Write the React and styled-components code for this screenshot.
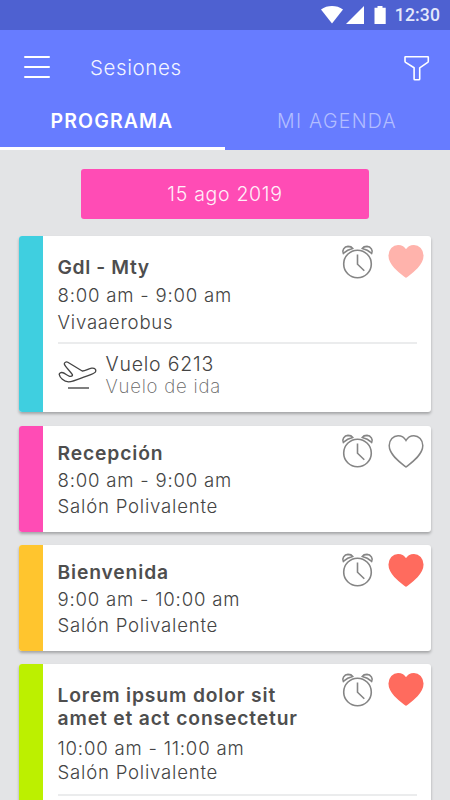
import React from 'react';
import styled, { createGlobalStyle } from 'styled-components';

const GlobalStyle = createGlobalStyle`
  * {
    box-sizing: border-box;
  }
  body {
    margin: 0;
    background: #e3e4e6;
    font-family: Inter, "Liberation Sans", sans-serif;
  }
`;

const Screen = styled.div`
  width: 450px;
  height: 800px;
  overflow: hidden;
  background: #e3e4e6;
`;

const StatusBar = styled.div`
  height: 30px;
  display: flex;
  align-items: center;
  justify-content: flex-end;
  padding-right: 10px;
  background: #4e61d1;
`;

const Clock = styled.span`
  margin-left: 7px;
  color: #e4e8fb;
  font: 500 17.6px/30px Roboto, sans-serif;
  letter-spacing: 0.1px;
`;

const Header = styled.header`
  height: 120px;
  display: flex;
  flex-direction: column;
  background: #677cff;
`;

const Toolbar = styled.div`
  height: 75px;
  display: flex;
  align-items: center;
  padding: 0 20.5px 0 23px;
`;

const ScreenTitle = styled.h1`
  flex: 1;
  margin: 0 0 0 39px;
  color: #f3f5ff;
  font-size: 20.5px;
  font-weight: 300;
  letter-spacing: 0.6px;
`;

const Tabs = styled.nav`
  flex: 1;
  display: flex;
`;

const Tab = styled.button`
  flex: 1;
  border: 0;
  border-bottom: 3px solid ${({ $active }) => ($active ? '#fff' : 'transparent')};
  padding: 0 1px 11px 0;
  background: none;
  color: ${({ $active }) => ($active ? '#fff' : '#b3beff')};
  font-family: inherit;
  font-size: 19.5px;
  font-weight: ${({ $active }) => ($active ? 600 : 300)};
  letter-spacing: ${({ $active }) => ($active ? '1.1px' : '1.3px')};
`;

const Content = styled.main`
  padding: 19px 19px 0;
`;

const DateButton = styled.button`
  display: block;
  width: 288px;
  height: 50px;
  margin: 0 auto 17px 62px;
  border: 0;
  border-radius: 3px;
  padding: 0;
  background: #ff4cb5;
  color: #fff0f9;
  font-family: inherit;
  font-size: 19.5px;
  font-weight: 300;
  letter-spacing: 0.7px;
`;

const Card = styled.article`
  display: flex;
  height: ${({ $height }) => $height}px;
  margin-bottom: ${({ $gap }) => $gap || 13}px;
  border-radius: 3px;
  overflow: hidden;
  background: #fff;
  box-shadow: 0 2px 3px rgba(0, 0, 0, 0.28);
`;

const Stripe = styled.div`
  flex: 0 0 23.5px;
  background: ${({ $color }) => $color};
`;

const Body = styled.div`
  flex: 1;
  padding: 0 14px 0 15px;
`;

const Summary = styled.div`
  display: flex;
  justify-content: space-between;
`;

const Info = styled.div`
  padding-top: ${({ $top }) => $top}px;
  white-space: nowrap;
`;

const Title = styled.h2`
  margin: 0 0 ${({ $gap }) => $gap || 0}px;
  color: #4e4e4e;
  font-size: 19.3px;
  font-weight: 600;
  line-height: ${({ $line }) => $line}px;
  letter-spacing: ${({ $spacing }) => $spacing || 0.85}px;
  white-space: pre-line;
`;

const Detail = styled.p`
  margin: 0;
  color: ${({ $light }) => ($light ? '#666' : '#444')};
  font-size: ${({ $size }) => $size || 18.6}px;
  font-weight: ${({ $light }) => ($light ? 200 : 300)};
  line-height: ${({ $line }) => $line}px;
  letter-spacing: 0.78px;
`;

const Actions = styled.div`
  display: flex;
  align-items: flex-start;
  gap: 14px;
  margin-right: -7px;
  padding-top: 8px;
`;

const Divider = styled.hr`
  height: 2px;
  margin: ${({ $top }) => $top}px 0 0;
  border: 0;
  background: #ebeced;
`;

const Flight = styled.div`
  display: flex;
  align-items: center;
  gap: 9px;
  padding-top: 9px;
`;

const AlarmSvg = styled.svg`
  margin-top: ${({ $lift }) => ($lift ? -1.5 : 0)}px;
`;

const AlarmIcon = ({ lift }) => (
  <AlarmSvg $lift={lift} width="33" height="35" viewBox="0 0 33 35" fill="none" stroke="#858585" strokeWidth="1.6">
    <circle cx="16.5" cy="20" r="13.8" />
    <path d="M16.5 10.6v9.6l6.8 6.6" />
    <path d="M2.3 9.4C.7 6.5 3.2 2.5 7 2.4c2.1 0 3.8.6 4.7 2.1-3.6.7-6.6 2.3-9.4 4.9z" />
    <path d="M30.7 9.4c1.6-2.9-.9-6.9-4.7-7-2.1 0-3.8.6-4.7 2.1 3.6.7 6.6 2.3 9.4 4.9z" />
  </AlarmSvg>
);

const HeartIcon = ({ fill, stroke }) => (
  <svg width="36" height="35" viewBox="0 0 36 35" fill={fill} stroke={stroke} strokeWidth="1.5">
    <path d="M18 33C12.5 28.8 1.2 21 1.2 11.6 1.2 5.8 5.3 1.7 10.1 1.7c3.6 0 6.4 2 7.9 4.8 1.5-2.8 4.3-4.8 7.9-4.8 4.8 0 8.9 4.1 8.9 9.9C34.8 21 23.5 28.8 18 33z" />
  </svg>
);

const PlaneIcon = () => (
  <svg width="39" height="30" viewBox="0 0 39 30" fill="none" stroke="#444" strokeWidth="1.3" strokeLinejoin="round">
    <path d="M1.2 14.4c.6 3.4 4.6 7.3 9.3 7.4 4.6 0 12-3.4 16-5 3.7-1.5 8.8-2.5 10.8-4.7 1.3-2.3-.3-4.3-3.6-4-3.3.4-6.6 3.2-9.5 2.9L9.8 2.2c-1.5-.9-3.9.2-3.4 2.1.9 2.6 5.7 6.8 8 10.4.4 1.4-1.7 2-3.3 1.4-2.4-.8-4.4-3.3-7.2-3.6-1.3-.1-2.6.6-2.7 1.9z" />
    <path d="M10 27.9h21" stroke="#555" strokeWidth="1.5" />
  </svg>
);

const FunnelIcon = () => (
  <svg width="26" height="27" viewBox="0 0 26 27" fill="none" stroke="#fff" strokeWidth="1.6" strokeLinejoin="round">
    <path d="M1.4 2.8h22.4c.3 0 .5.2.5.5v4c0 .5-.2.8-.6 1.1l-8 5.4v11.2c0 .5-.3.8-.8.8h-4c-.5 0-.8-.3-.8-.8V13.8L1.6 8.4C1.2 8.1 1 7.8 1 7.3v-4c0-.3.1-.5.4-.5z" />
  </svg>
);

const MenuIcon = () => (
  <svg width="28" height="24" viewBox="0 0 28 24" fill="none" stroke="#fff" strokeWidth="2" strokeLinecap="round">
    <path d="M2 1h24M2 11h24M2 21h24" />
  </svg>
);

const StatusIcons = () => (
  <svg width="67" height="20" viewBox="0 0 67 20" fill="#fff">
    <path d="M0 4.5C3.2 1.8 7 .9 11 .9s7.8.9 11 3.6L11 18.5z" />
    <path d="M43 1v18H25z" />
    <path d="M53.5 2.8h3V1h5v1.8h3.2V19H53.5z" />
  </svg>
);

const sessions = [
  {
    title: 'Gdl - Mty', time: '8:00 am - 9:00 am', place: 'Vivaaerobus',
    color: '#3fcfe0', heart: 'pale', height: 176, gap: 14, top: 18, titleLine: 27.5, titleSpacing: 0.6, line: 27.5,
    dividerTop: 5, flight: true,
  },
  {
    title: 'Recepción', time: '8:00 am - 9:00 am', place: 'Salón Polivalente',
    color: '#ff4cb5', heart: 'none', height: 106, top: 15, titleLine: 25.8, line: 26, lift: true,
  },
  {
    title: 'Bienvenida', time: '9:00 am - 10:00 am', place: 'Salón Polivalente',
    color: '#ffc52e', heart: 'full', height: 106, top: 15, titleLine: 25.8, line: 26, lift: true,
  },
  {
    title: 'Lorem ipsum dolor sit\namet et act consectetur', time: '10:00 am - 11:00 am', place: 'Salón Polivalente',
    color: '#bcf000', heart: 'full', height: 190, top: 20, titleLine: 22.5, titleGap: 6.5, line: 24.2,
    dividerTop: 10.5,
  },
];

const hearts = {
  none: { fill: 'none', stroke: '#858585' },
  pale: { fill: '#ffb3ac', stroke: '#ffb3ac' },
  full: { fill: '#ff6b5e', stroke: '#ff6b5e' },
};

const Session = ({ session }) => (
  <Card $height={session.height} $gap={session.gap}>
    <Stripe $color={session.color} />
    <Body>
      <Summary>
        <Info $top={session.top}>
          <Title $line={session.titleLine} $gap={session.titleGap} $spacing={session.titleSpacing}>
            {session.title}
          </Title>
          <Detail $line={session.line}>{session.time}</Detail>
          <Detail $line={session.line}>{session.place}</Detail>
        </Info>
        <Actions>
          <AlarmIcon lift={session.lift} />
          <HeartIcon {...hearts[session.heart]} />
        </Actions>
      </Summary>
      {session.dividerTop && <Divider $top={session.dividerTop} />}
      {session.flight && (
        <Flight>
          <PlaneIcon />
          <div>
            <Detail $line={22.5} $size={19.5}>Vuelo 6213</Detail>
            <Detail $line={22.5} $light>Vuelo de ida</Detail>
          </div>
        </Flight>
      )}
    </Body>
  </Card>
);

const App = () => (
  <Screen>
    <GlobalStyle />
    <StatusBar>
      <StatusIcons />
      <Clock>12:30</Clock>
    </StatusBar>
    <Header>
      <Toolbar>
        <MenuIcon />
        <ScreenTitle>Sesiones</ScreenTitle>
        <FunnelIcon />
      </Toolbar>
      <Tabs>
        <Tab $active>PROGRAMA</Tab>
        <Tab>MI AGENDA</Tab>
      </Tabs>
    </Header>
    <Content>
      <DateButton>15 ago 2019</DateButton>
      {sessions.map((session) => <Session key={session.title} session={session} />)}
    </Content>
  </Screen>
);

export default App;
